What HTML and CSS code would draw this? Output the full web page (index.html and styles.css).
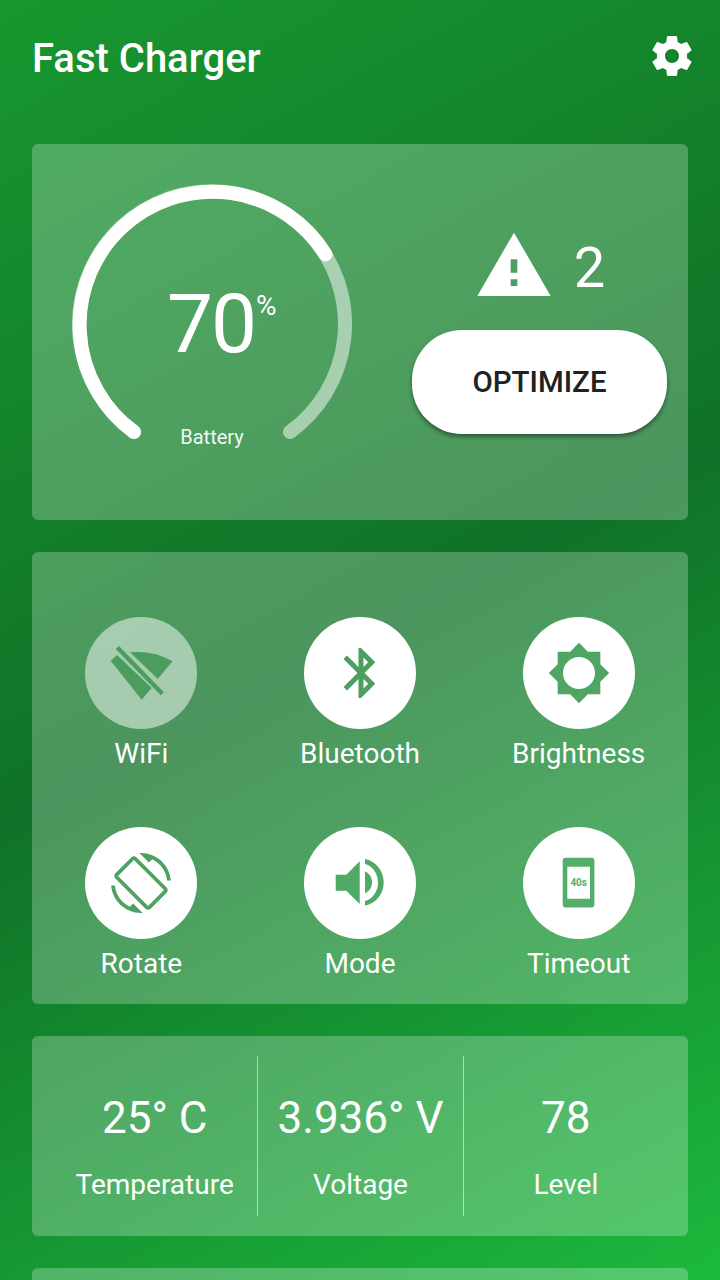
FILE: index.html
```html
<!DOCTYPE html>
<html lang="en">

<head>
    <meta charset="UTF-8">
    <meta name="viewport" content="width=device-width, initial-scale=1.0">
    <title>Fast Charger</title>
    <link rel="stylesheet" href="styles.css">
</head>

<body>
    <div class="main-container">
        <header class="top-bar">
            <h1>Fast Charger</h1>
            <svg class="gear" viewBox="0 0 24 24">
                <path d="M19.43 12.98c.04-.32.07-.64.07-.98s-.03-.66-.07-.98l2.11-1.65c.19-.15.24-.42.12-.64l-2-3.46c-.12-.22-.39-.3-.61-.22l-2.49 1c-.52-.4-1.08-.73-1.69-.98l-.38-2.65C14.46 2.18 14.25 2 14 2h-4c-.25 0-.46.18-.49.42l-.38 2.65c-.61.25-1.17.59-1.69.98l-2.49-1c-.23-.09-.49 0-.61.22l-2 3.46c-.13.22-.07.49.12.64l2.11 1.65c-.04.32-.07.65-.07.98s.03.66.07.98l-2.11 1.65c-.19.15-.24.42-.12.64l2 3.46c.12.22.39.3.61.22l2.49-1c.52.4 1.08.73 1.69.98l.38 2.65c.03.24.24.42.49.42h4c.25 0 .46-.18.49-.42l.38-2.65c.61-.25 1.17-.59 1.69-.98l2.49 1c.23.09.49 0 .61-.22l2-3.46c.12-.22.07-.49-.12-.64l-2.11-1.65zM12 15.5c-1.93 0-3.5-1.57-3.5-3.5s1.57-3.5 3.5-3.5 3.5 1.57 3.5 3.5-1.57 3.5-3.5 3.5z"/>
            </svg>
        </header>

        <section class="card battery-card">
            <div class="gauge">
                <svg class="gauge-arc" viewBox="0 0 280 280">
                    <path class="arc-track" d="M62 248A133 133 0 1 1 218 248"/>
                    <path class="arc-value" d="M62 248A133 133 0 1 1 253.5 70.4"/>
                </svg>
                <div class="gauge-value">70</div>
                <div class="gauge-unit">%</div>
                <div class="gauge-label">Battery</div>
            </div>
            <div class="battery-side">
                <div class="warning">
                    <svg class="warning-icon" viewBox="0 0 24 24">
                        <path d="M1 21h22L12 2 1 21zm12-3h-2v-2h2v2zm0-4h-2v-4h2v4z"/>
                    </svg>
                    <span class="warning-count">2</span>
                </div>
                <button class="optimize" type="button">OPTIMIZE</button>
            </div>
        </section>

        <section class="card toggles">
            <div class="toggle">
                <div class="circle circle-off">
                    <svg class="icon-wifi" viewBox="0 0 112 112">
                        <path d="M45 35.3Q68 33 87.7 44.3L72.7 61.700Z"/>
                        <path d="M25.700 43.700L32 38 66.700 71 56.700 82.700Z"/>
                        <path d="M30.700 32L34 29 79 75.300 75.700 78.300Z"/>
                    </svg>
                </div>
                <span class="toggle-name">WiFi</span>
            </div>
            <div class="toggle">
                <div class="circle">
                    <svg class="icon-bluetooth" viewBox="0 0 24 24">
                        <path d="M17.71 7.71L12 2h-1v7.59L6.41 5 5 6.41 10.59 12 5 17.59 6.41 19 11 14.41V22h1l5.71-5.71-4.3-4.29 4.3-4.29zM13 5.83l1.88 1.88L13 9.59V5.83zm1.88 10.46L13 18.17v-3.76l1.88 1.88z"/>
                    </svg>
                </div>
                <span class="toggle-name">Bluetooth</span>
            </div>
            <div class="toggle">
                <div class="circle">
                    <svg class="icon-brightness" viewBox="0 0 24 24">
                        <path d="M20 15.31L23.31 12 20 8.690V4h-4.690L12 .69 8.690 4H4v4.690L.69 12 4 15.310V20h4.690L12 23.310 15.310 20H20v-4.690zM12 18c-3.310 0-6-2.690-6-6s2.690-6 6-6 6 2.690 6 6-2.690 6-6 6z"/>
                    </svg>
                </div>
                <span class="toggle-name">Brightness</span>
            </div>
            <div class="toggle">
                <div class="circle">
                    <svg class="icon-rotate" viewBox="0 0 24 24">
                        <path d="M16.48 2.52c3.27 1.55 5.61 4.72 5.97 8.48h1.5C23.44 4.84 18.29 0 12 0l-.66.03 3.81 3.81 1.33-1.32zm-6.25-.77c-.59-.59-1.54-.59-2.12 0L1.75 8.11c-.59.59-.59 1.54 0 2.12l12.02 12.02c.59.59 1.54.59 2.12 0l6.36-6.36c.59-.59.59-1.54 0-2.12L10.23 1.75zm4.6 19.44L2.81 9.17l6.36-6.36 12.02 12.02-6.36 6.36zm-7.31.29C4.25 19.94 1.91 16.76 1.55 13H.05C.56 19.16 5.71 24 12 24l.66-.03-3.81-3.81-1.33 1.32z"/>
                    </svg>
                </div>
                <span class="toggle-name">Rotate</span>
            </div>
            <div class="toggle">
                <div class="circle">
                    <svg class="icon-mode" viewBox="0 0 112 112">
                        <path d="M31.700 47.700H42.300L55.700 34.300V77L42.300 63.700H31.700Z"/>
                        <path d="M61 44.300C65.500 46.500 68 50.500 68 55.500S65.500 64 61 66.300Z"/>
                        <path d="M61 32C72 34 79.700 44 79.700 55.500S72 76.500 61 78.700V74C69 72 74 64 74 55.500S69 39 61 37Z"/>
                    </svg>
                </div>
                <span class="toggle-name">Mode</span>
            </div>
            <div class="toggle">
                <div class="circle">
                    <svg class="icon-timeout" viewBox="0 0 112 112">
                        <path fill-rule="evenodd" d="M42.700 30.700H68.400A3 3 0 0 1 71.400 33.700V77.400A3 3 0 0 1 68.400 80.400H42.700A3 3 0 0 1 39.700 77.400V33.700A3 3 0 0 1 42.700 30.700ZM44.300 39.700V71.700H67V39.700Z"/>
                        <text class="timeout-text" x="55.700" y="59">40s</text>
                    </svg>
                </div>
                <span class="toggle-name">Timeout</span>
            </div>
        </section>

        <section class="card stats">
            <div class="stat">
                <span class="stat-value">25° C</span>
                <span class="stat-name">Temperature</span>
            </div>
            <div class="stat">
                <span class="stat-value">3.936° V</span>
                <span class="stat-name">Voltage</span>
            </div>
            <div class="stat">
                <span class="stat-value">78</span>
                <span class="stat-name">Level</span>
            </div>
        </section>

        <section class="card extra"></section>
    </div>
</body>

</html>
```

FILE: styles.css
```css
html,
body {
    margin: 0;
    height: 1280px;
    overflow: hidden;
}

body {
    font-family: 'Roboto', 'Liberation Sans', sans-serif;
    color: #fff;
}

.main-container {
    height: 1280px;
    overflow: hidden;
    box-sizing: border-box;
    padding: 0 32px;
    display: flex;
    flex-direction: column;
    gap: 32px;
    background: linear-gradient(152deg, #17972f 0%, #107228 50%, #1cb93d 100%);
}

.top-bar {
    flex: none;
    height: 112px;
    display: flex;
    align-items: flex-start;
    justify-content: space-between;
}

h1 {
    margin: 32px 0 0;
    font-size: 40px;
    line-height: 54px;
    font-weight: 500;
}

.gear {
    width: 48px;
    height: 48px;
    margin: 32px -8px 0 0;
    fill: #fff;
}

.card {
    flex: none;
    border-radius: 6px;
    background-color: rgba(255, 255, 255, 0.25);
}

/* battery */
.battery-card {
    height: 376px;
    box-sizing: border-box;
    padding: 40px 21px 0 40px;
    display: flex;
    justify-content: space-between;
}

.gauge {
    position: relative;
    width: 280px;
    height: 280px;
}

.gauge-arc {
    display: block;
    width: 280px;
    height: 280px;
    fill: none;
    stroke-width: 14;
    stroke-linecap: round;
}

.arc-track {
    stroke: rgba(255, 255, 255, 0.5);
}

.arc-value {
    stroke: #fff;
}

.gauge-value {
    position: absolute;
    left: 95px;
    top: 92px;
    font-size: 82px;
    line-height: 96px;
    font-weight: 400;
    letter-spacing: -2px;
}

.gauge-unit {
    position: absolute;
    left: 184px;
    top: 106px;
    font-size: 28px;
    line-height: 32px;
}

.gauge-label {
    position: absolute;
    left: 0;
    right: 0;
    top: 240px;
    text-align: center;
    font-size: 20px;
    line-height: 26px;
    color: rgba(255, 255, 255, 0.95);
}

.battery-side {
    width: 255px;
    padding-top: 42px;
    display: flex;
    flex-direction: column;
    align-items: center;
}

.warning {
    height: 80px;
    display: flex;
    align-items: center;
    gap: 20px;
}

.warning-icon {
    width: 80px;
    height: 80px;
    fill: #fff;
}

.warning-count {
    padding-top: 4px;
    font-size: 56px;
    font-weight: 400;
}

.optimize {
    width: 255px;
    height: 104px;
    margin-top: 24px;
    border: none;
    border-radius: 50px;
    background-color: #fff;
    color: #212121;
    font-family: inherit;
    font-size: 29.5px;
    font-weight: 500;
    box-shadow: 0 3px 4px rgba(0, 0, 0, 0.4);
}

/* toggles */
.toggles {
    height: 452px;
    box-sizing: border-box;
    padding-top: 65px;
    display: grid;
    grid-template-columns: repeat(3, 1fr);
    grid-auto-rows: 210px;
}

.toggle {
    display: flex;
    flex-direction: column;
    align-items: center;
}

.circle {
    width: 112px;
    height: 112px;
    border-radius: 50%;
    background-color: #fff;
    display: flex;
    align-items: center;
    justify-content: center;
}

.circle-off {
    background-color: rgba(255, 255, 255, 0.5);
}

.toggle-name {
    margin-top: 9px;
    font-size: 28px;
    line-height: 32px;
}

.icon-wifi,
.icon-mode,
.icon-timeout {
    width: 112px;
    height: 112px;
}

.icon-bluetooth {
    width: 60px;
    height: 60px;
    margin-left: 3px;
    fill: #4d9f60;
}

.icon-brightness {
    width: 64px;
    height: 64px;
    fill: #50a564;
}

.icon-rotate {
    width: 60px;
    height: 60px;
    fill: #4da262;
}

.icon-wifi {
    fill: #4b9d5e;
}

.icon-mode {
    fill: #50a966;
}

.icon-timeout {
    fill: #54ae69;
}

.timeout-text {
    font-size: 10px;
    font-weight: 700;
    text-anchor: middle;
}

/* stats */
.stats {
    height: 200px;
    box-sizing: border-box;
    padding: 20px;
    display: grid;
    grid-template-columns: repeat(3, 1fr);
}

.stat {
    display: flex;
    flex-direction: column;
    align-items: center;
    border-left: 1px solid rgba(255, 255, 255, 0.55);
}

.stat:first-child {
    border-left: none;
}

.stat-value {
    margin-top: 34px;
    font-size: 44px;
    line-height: 56px;
    font-weight: 400;
}

.stat-name {
    margin-top: 23px;
    font-size: 28px;
    line-height: 32px;
}

.extra {
    height: 200px;
}
```
